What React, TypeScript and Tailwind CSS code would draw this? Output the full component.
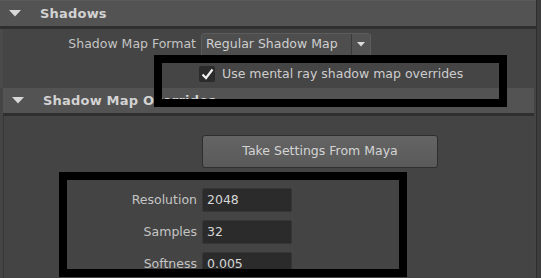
import React from 'react'

const font = { fontFamily: '"DejaVu Sans", Verdana, sans-serif' }

function Triangle() {
  return (
    <svg width="12" height="7" viewBox="0 0 12 7" className="shrink-0">
      <path d="M0 0 H12 L6 6.5 Z" fill="#d8d8d8" />
    </svg>
  )
}

function SectionHeader({ title }: { title: string }) {
  return (
    <div className="h-[25px] bg-[#535353] flex items-center pl-[9px] gap-[19px] border-b-[3px] border-[#2f2f2f] box-content">
      <Triangle />
      <span className="font-bold text-[13px] text-[#d2d2d2] tracking-[0.2px]">{title}</span>
    </div>
  )
}

function Field({ label, value }: { label: string; value: string }) {
  return (
    <div className="flex items-center h-[24px]">
      <div className="w-[198px] text-right pr-[5px] text-[#c4c4c4]">{label}</div>
      <div className="w-[90px] h-[24px] bg-[#2b2b2b] rounded-[2px] border border-[#363636] flex items-center pl-[4px] text-[#d6d6d6]">
        {value}
      </div>
    </div>
  )
}

export default function App() {
  return (
    <div className="relative w-[541px] h-[278px] overflow-hidden bg-[#3d3d3d] flex text-[12.5px]" style={font}>
      <div className="w-[537px] flex flex-col border-r border-[#2e2e2e]">
        <div className="h-[1px] bg-[#5a5a5a]" />
        <SectionHeader title="Shadows" />

        {/* Shadows body */}
        <div className="bg-[#454545] border-l-[3px] border-[#4a4a4a] pt-[4px] pb-[5px] flex flex-col">
          <div className="flex items-center h-[23px]">
            <div className="w-[198px] text-right pr-[5px] text-[#c4c4c4]">Shadow Map Format</div>
            <div className="flex h-[23px] w-[170px] bg-[#4e4e4e] border border-[#5c5c5c] rounded-t-[3px]">
              <div className="flex-1 flex items-center pl-[4px] text-[#cfcfcf]">Regular Shadow Map</div>
              <div className="w-[19px] border-l border-[#3a3a3a] flex items-center justify-center bg-[#525252] rounded-tr-[3px]">
                <svg width="8" height="5" viewBox="0 0 8 5">
                  <path d="M0 0 H8 L4 4.5 Z" fill="#dcdcdc" />
                </svg>
              </div>
            </div>
          </div>
          <div className="flex items-center h-[18px] mt-[9px] pl-[196px] gap-[7px]">
            <div className="w-[16px] h-[16px] bg-[#2b2b2b] rounded-[2px] flex items-center justify-center">
              <svg width="13" height="12" viewBox="0 0 13 12">
                <path d="M1.5 6.5 L5 10 L11.5 1.5" stroke="#f0f0f0" strokeWidth="2.2" fill="none" />
              </svg>
            </div>
            <span className="text-[#cdcdcd]">Use mental ray shadow map overrides</span>
          </div>
        </div>

        {/* Shadow Map Overrides */}
        <div className="pl-[3px] pr-[2px] flex flex-col flex-1 bg-[#454545]">
          <SectionHeader title="Shadow Map Overrides" />
          <div className="flex-1 bg-[#444444] border-l border-[#383838] pt-[19px] flex flex-col">
            <div className="pl-[198px]">
              <div className="w-[236px] h-[33px] rounded-[3px] bg-gradient-to-b from-[#646464] to-[#5a5a5a] border border-[#2e2e2e] flex items-center justify-center text-[#d4d4d4]">
                Take Settings From Maya
              </div>
            </div>
            <div className="flex flex-col gap-[8px] mt-[20px]">
              <Field label="Resolution" value="2048" />
              <Field label="Samples" value="32" />
              <Field label="Softness" value="0.005" />
            </div>
          </div>
        </div>
      </div>

      {/* annotation boxes */}
      <div className="absolute left-[154px] top-[55px] w-[353px] h-[52px] border-[8px] border-black" />
      <div className="absolute left-[59px] top-[172px] w-[348px] h-[105px] border-[8px] border-black" />
    </div>
  )
}
